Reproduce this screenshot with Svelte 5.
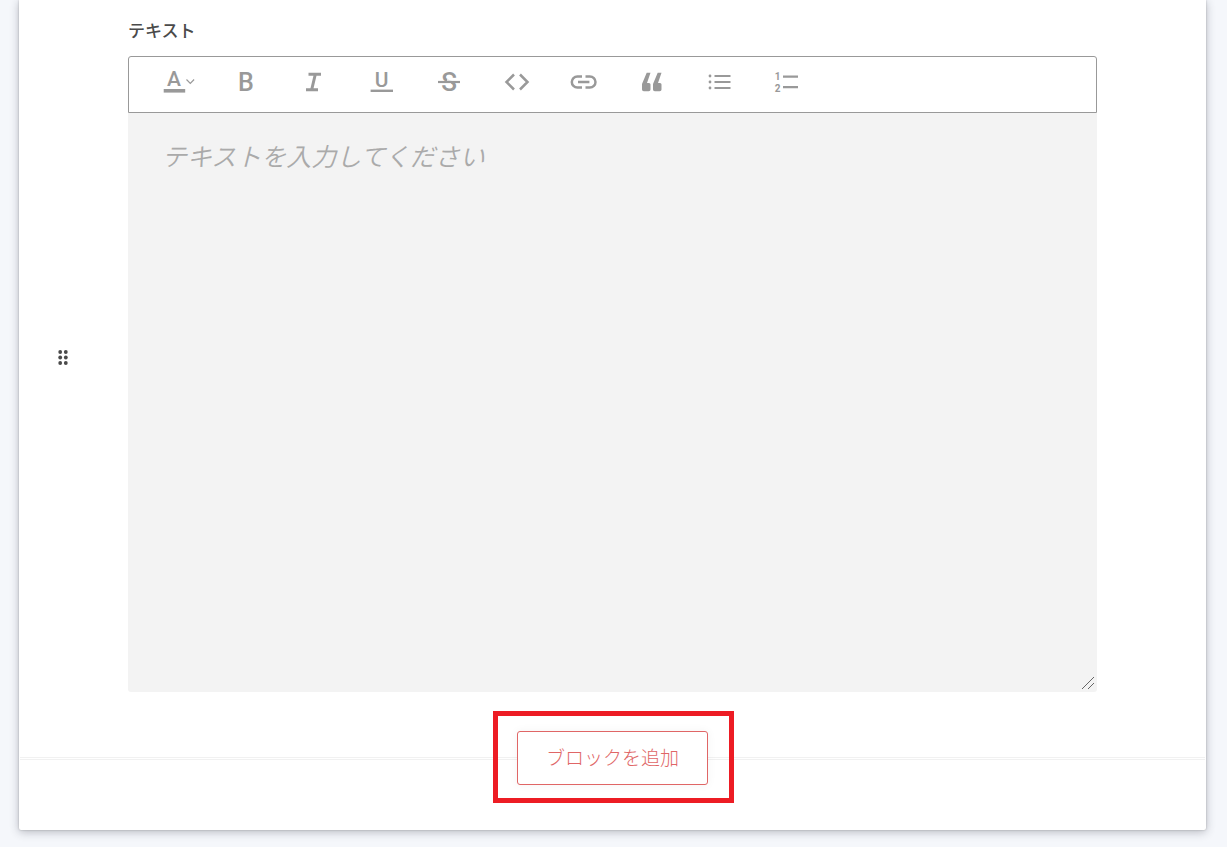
<script lang="ts">
  const tools = [
    { id: 'color', label: '文字色' },
    { id: 'bold', label: '太字' },
    { id: 'italic', label: '斜体' },
    { id: 'underline', label: '下線' },
    { id: 'strike', label: '取り消し線' },
    { id: 'code', label: 'コード' },
    { id: 'link', label: 'リンク' },
    { id: 'quote', label: '引用' },
    { id: 'bullets', label: '箇条書き' },
    { id: 'numbers', label: '番号付きリスト' }
  ];

  let body = $state('');
</script>

<main class="card">
  <section class="block">
    <button type="button" class="handle" aria-label="並べ替え">
      <svg width="12" height="18" viewBox="0 0 12 18" fill="#4a4a4a">
        {#each [4, 9.5, 15] as y}
          <circle cx="3.2" cy={y} r="1.9" />
          <circle cx="8.8" cy={y} r="1.9" />
        {/each}
      </svg>
    </button>

    <div class="field">
      <label for="block-text">テキスト</label>
      <div class="toolbar" role="toolbar" aria-label="書式">
        <div class="tools">
          {#each tools as tool}
            <button type="button" aria-label={tool.label}>
              <svg width="40" height="30" viewBox="0 0 40 30">
                {#if tool.id === 'color'}
                  <text x="15" y="19" font-size="21" font-weight="500">A</text>
                  <path class="solid" d="M4.7 22h21.5v3.6H4.7z" />
                  <path d="M27.5 12.5l3.8 3.8 3.8-3.8" stroke-width="1.2" />
                {:else if tool.id === 'bold'}
                  <text x="20" y="24" font-size="25" font-weight="500">B</text>
                {:else if tool.id === 'italic'}
                  <path d="M14.5 7.2h12.5M12 22.8h12M21.4 7L17.6 23" stroke-width="3" />
                {:else if tool.id === 'underline'}
                  <text x="19.5" y="20" font-size="21" font-weight="500">U</text>
                  <path d="M8.6 23.8h22.4" stroke-width="2.4" />
                {:else if tool.id === 'strike'}
                  <text x="20" y="24" font-size="26" font-weight="500">S</text>
                  <path class="gap" d="M9 17h13M18 13h13" stroke-width="1.4" />
                  <path d="M9 15h22" stroke-width="2.2" />
                {:else if tool.id === 'code'}
                  <path d="M17 7.5L9.5 15l7.500 7.500M23 7.500l7.500 7.500-7.500 7.500" stroke-width="2.5" />
                {:else if tool.id === 'link'}
                  <path d="M18 9.4h-4.6a5.6 5.6 0 000 11.2H18M21.5 9.4h4.4a5.6 5.6 0 010 11.2h-4.4M14 15h11.4" stroke-width="2.5" />
                {:else if tool.id === 'quote'}
                  <path class="solid" d="M14.7 5.8h3.8L15 16h2a1.5 1.5 0 011.5 1.5v5a1.8 1.8 0 01-1.8 1.8h-4.9a1.8 1.8 0 01-1.8-1.8V17z" />
                  <path class="solid" d="M25.7 5.8h3.8L26 16h2a1.5 1.5 0 011.5 1.5v5a1.8 1.8 0 01-1.8 1.8h-4.9a1.8 1.8 0 01-1.8-1.8V17z" />
                {:else if tool.id === 'bullets'}
                  <path d="M14.5 9h16M14.5 15h16M14.5 21h16" stroke-width="2" />
                  {#each [9, 15, 21] as y}
                    <circle class="solid" cx="10" cy={y} r="1.4" />
                  {/each}
                {:else}
                  <text x="10.5" y="13" font-size="10" font-weight="700">1</text>
                  <text x="10.5" y="25" font-size="10" font-weight="700">2</text>
                  <path d="M16 9.7h15M16 20.2h15" stroke-width="2.2" />
                {/if}
              </svg>
            </button>
          {/each}
        </div>
      </div>
      <div class="editor">
        <textarea id="block-text" bind:value={body} placeholder="テキストを入力してください"></textarea>
        <svg class="grip" width="14" height="14" viewBox="0 0 14 14" aria-hidden="true">
          <path d="M1 13L13 1M7 13l6-6" />
        </svg>
      </div>
    </div>
  </section>

  <div class="add-row">
    <hr />
    <div class="highlight">
      <button type="button" class="add">ブロックを追加</button>
    </div>
    <hr />
  </div>
</main>

<style>
  :global(body) {
    background: #f5f7fb;
    font-family: 'Noto Sans CJK JP', sans-serif;
  }

  .card {
    margin: 0 21px 17px 19px;
    padding: 22px 1px 45px;
    border-radius: 0 0 2px 2px;
    background: #fff;
    box-shadow: 0 0 2px rgba(0, 0, 0, 0.25), 0 2px 10px rgba(40, 44, 60, 0.3);
  }

  .block {
    display: grid;
    grid-template-columns: 108px minmax(0, 1fr) 108px;
    align-items: center;
  }

  .handle {
    display: flex;
    width: 32px;
    margin-left: 27px;
    padding: 10px;
    border: none;
    background: none;
    cursor: grab;
  }

  .field {
    display: flex;
    flex-direction: column;
  }

  label {
    margin-bottom: 18px;
    color: #4a4a4a;
    font-size: 17px;
    font-weight: 500;
    line-height: 16px;
  }

  .toolbar {
    padding: 0 16px 4px;
    border: 1px solid #999;
    border-radius: 3px 3px 0 0;
  }

  .tools {
    display: flex;
    max-width: 676px;
  }

  .tools button {
    display: flex;
    flex: 1;
    justify-content: center;
    min-width: 0;
    padding: 10px 0 11px;
    border: none;
    background: none;
    cursor: pointer;
  }

  .tools svg {
    flex: none;
    fill: none;
    stroke: #999;
  }

  .tools text {
    fill: #999;
    stroke: none;
    font-family: Roboto, sans-serif;
    text-anchor: middle;
  }

  .tools .solid {
    fill: #999;
    stroke: none;
  }

  .tools .gap {
    stroke: #fff;
  }

  .editor {
    position: relative;
  }

  textarea {
    display: block;
    box-sizing: border-box;
    width: 100%;
    height: 579px;
    padding: 23px 34px;
    border: none;
    border-radius: 0 0 3px 3px;
    background: #f3f3f3;
    font-family: inherit;
    font-size: 25px;
    line-height: 38px;
    resize: vertical;
  }

  textarea::-webkit-resizer {
    background: transparent;
  }

  textarea::placeholder {
    color: #aaa;
    font-style: italic;
    font-weight: 350;
    opacity: 1;
  }

  .grip {
    position: absolute;
    right: 2px;
    bottom: 2px;
    stroke: #666;
    pointer-events: none;
  }

  .add-row {
    display: flex;
    align-items: center;
    margin-top: 39px;
  }

  .add-row hr {
    flex: 1;
    margin: 0;
    border: none;
    border-top: 3px double #f1f1f1;
  }

  .highlight {
    position: relative;
  }

  .highlight::after {
    content: '';
    position: absolute;
    inset: -20px -26px -18px -24px;
    border: 5px solid #ed1c24;
    pointer-events: none;
  }

  .add {
    display: block;
    padding: 11px 28px 13px;
    border: 1px solid #e06666;
    border-radius: 3px;
    background: #fff;
    box-shadow: 0 0 10px rgba(0, 0, 0, 0.05);
    color: #e06666;
    font-family: inherit;
    font-size: 19px;
    font-weight: 300;
    line-height: 28px;
    cursor: pointer;
  }
</style>
